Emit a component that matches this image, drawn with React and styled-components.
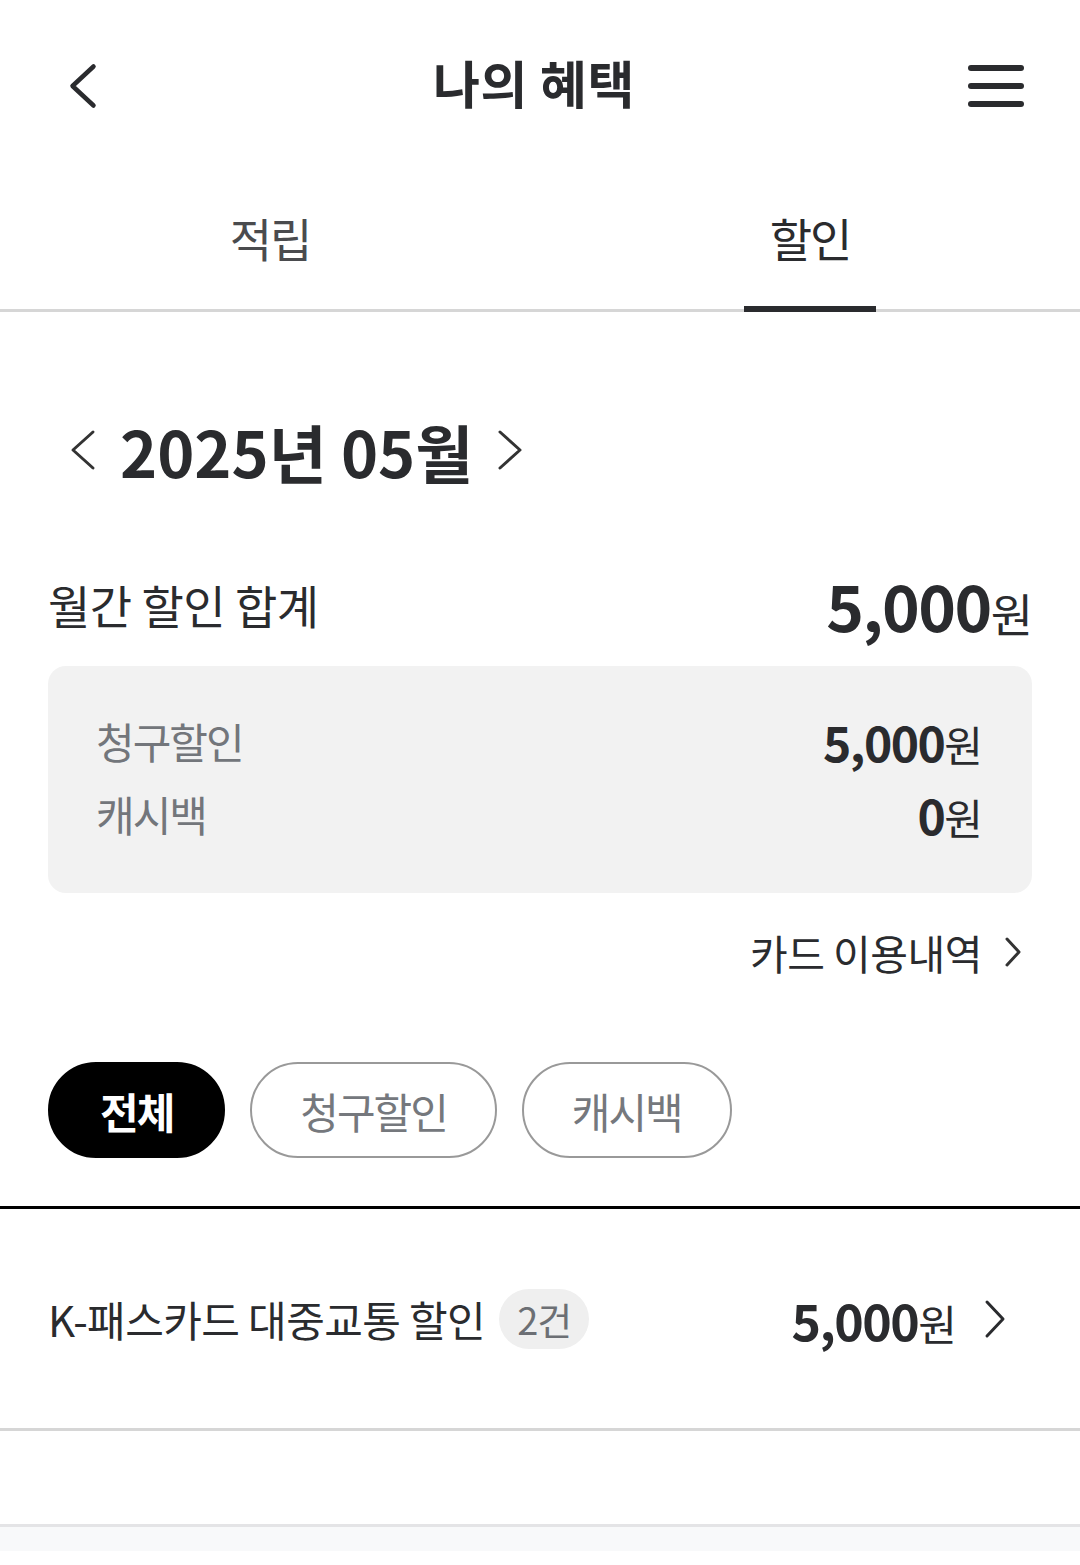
import React from 'react';
import styled, { createGlobalStyle } from 'styled-components';

const GlobalStyle = createGlobalStyle`
  html, body {
    margin: 0;
    padding: 0;
    background: #fff;
  }
  body {
    font-family: "Noto Sans CJK KR", "Noto Sans", sans-serif;
    color: #2a2b2e;
  }
  * { box-sizing: border-box; }
`;

const Page = styled.div`
  width: 1080px;
  min-height: 1565px;
  background: #fff;
`;

const Header = styled.header`
  height: 172px;
  display: flex;
  align-items: center;
  justify-content: space-between;
  padding: 0 56px 0 66px;
`;

const IconButton = styled.button`
  border: 0;
  background: none;
  padding: 0;
  display: flex;
  align-items: center;
  justify-content: center;
  width: ${p => p.$w}px;
  height: ${p => p.$h}px;
`;

const Title = styled.h1`
  margin: 0 0 8px;
  font-size: 51px;
  font-weight: 700;
  letter-spacing: 0.5px;
  line-height: 1;
  color: #2a2b2e;
`;

const TabBar = styled.nav`
  height: 140px;
  display: grid;
  grid-template-columns: 1fr 1fr;
  border-bottom: 3px solid #d6d6d6;
`;

const Tab = styled.div`
  position: relative;
  display: flex;
  align-items: center;
  justify-content: center;
  padding-bottom: 8px;
  font-size: 46px;
  letter-spacing: -2px;
  color: ${p => (p.$active ? '#2a2b2e' : '#4a4b4e')};
  &::after {
    content: '';
    display: ${p => (p.$active ? 'block' : 'none')};
    position: absolute;
    left: 50%;
    bottom: -3px;
    width: 132px;
    margin-left: -66px;
    height: 6px;
    background: #2a2b2e;
  }
`;

const MonthNav = styled.div`
  margin-top: 88px;
  height: 100px;
  display: flex;
  align-items: center;
  padding-left: 70px;
  gap: 24px;
`;

const MonthLabel = styled.div`
  font-size: 63px;
  font-weight: 700;
  letter-spacing: 0;
  line-height: 1;
  color: #2a2b2e;
`;

const SummaryHead = styled.div`
  margin-top: 64px;
  height: 80px;
  padding: 0 48px;
  display: flex;
  align-items: center;
  justify-content: space-between;
`;

const SummaryLabel = styled.div`
  font-size: 46px;
  letter-spacing: -0.5px;
  color: #2a2b2e;
`;

const Amount = styled.div`
  display: flex;
  align-items: baseline;
  color: #2a2b2e;
  line-height: 1;
`;

const Num = styled.span`
  font-size: ${p => p.$size}px;
  font-weight: 700;
  letter-spacing: -1.5px;
`;

const Won = styled.span`
  font-size: ${p => p.$size}px;
  font-weight: 400;
  letter-spacing: -1px;
`;

const DetailBox = styled.div`
  margin: 22px 48px 0;
  background: #f2f2f2;
  border-radius: 18px;
  padding: 38px 50px 43px 48px;
`;

const DetailRow = styled.div`
  height: 73px;
  display: flex;
  align-items: center;
  justify-content: space-between;
`;

const DetailLabel = styled.div`
  font-size: 42px;
  letter-spacing: -2px;
  color: #73767b;
`;

const LinkRow = styled.div`
  margin-top: 29px;
  height: 60px;
  padding: 0 58px 0 48px;
  display: flex;
  align-items: center;
  justify-content: flex-end;
  gap: 22px;
  font-size: 41px;
  letter-spacing: -0.5px;
  color: #2a2b2e;
`;

const ChipRow = styled.div`
  margin-top: 80px;
  padding: 0 48px;
  display: flex;
  gap: 25px;
`;

const Chip = styled.button`
  height: 96px;
  padding: 0 ${p => p.$pad}px;
  border-radius: 48px;
  font-family: inherit;
  font-size: 42px;
  letter-spacing: -2px;
  font-weight: ${p => (p.$active ? 700 : 400)};
  color: ${p => (p.$active ? '#fff' : '#75787d')};
  background: ${p => (p.$active ? '#000' : '#fff')};
  border: 2px solid ${p => (p.$active ? '#000' : '#999')};
  display: flex;
  align-items: center;
`;

const ListTop = styled.div`
  margin-top: 48px;
  border-top: 3px solid #000;
`;

const ListItem = styled.div`
  height: 222px;
  padding: 0 74px 0 48px;
  display: flex;
  align-items: center;
  justify-content: space-between;
  border-bottom: 3px solid #d6d6d6;
`;

const ItemLeft = styled.div`
  display: flex;
  align-items: center;
  gap: 14px;
`;

const ItemName = styled.div`
  font-size: 42px;
  letter-spacing: -0.6px;
  color: #2a2b2e;
`;

const CountBadge = styled.span`
  height: 60px;
  padding: 0 18px;
  border-radius: 30px;
  background: #efefef;
  display: flex;
  align-items: center;
  font-size: 38px;
  letter-spacing: -1px;
  color: #6c6f74;
`;

const ItemRight = styled.div`
  display: flex;
  align-items: center;
  gap: 28px;
`;

const Spacer = styled.div`
  height: 96px;
  border-bottom: 3px solid #e4e4e6;
`;

const Footer = styled.div`
  height: 24px;
  background: #f8f9fa;
`;

const Chevron = ({ dir = 'right', w, h, stroke = 3, color = '#2a2b2e' }) => {
  const pts = dir === 'left'
    ? `${w - stroke} ${stroke}, ${stroke} ${h / 2}, ${w - stroke} ${h - stroke}`
    : `${stroke} ${stroke}, ${w - stroke} ${h / 2}, ${stroke} ${h - stroke}`;
  return (
    <svg width={w} height={h} viewBox={`0 0 ${w} ${h}`}>
      <polyline points={pts} fill="none" stroke={color} strokeWidth={stroke} strokeLinecap="round" strokeLinejoin="round" />
    </svg>
  );
};

const Hamburger = () => (
  <svg width="56" height="44" viewBox="0 0 56 44">
    {[4, 22, 40].map(y => (
      <line key={y} x1="3" y1={y} x2="53" y2={y} stroke="#2a2b2e" strokeWidth="6" strokeLinecap="round" />
    ))}
  </svg>
);

const Price = ({ value, num, won }) => (
  <Amount>
    <Num $size={num}>{value}</Num>
    <Won $size={won}>원</Won>
  </Amount>
);

const details = [
  { label: '청구할인', value: '5,000' },
  { label: '캐시백', value: '0' },
];

const chips = [
  { label: '전체', active: true, pad: 50 },
  { label: '청구할인', pad: 48 },
  { label: '캐시백', pad: 48 },
];

export default function App() {
  return (
    <Page>
      <GlobalStyle />
      <Header>
        <IconButton $w={34} $h={50}>
          <Chevron dir="left" w={30} h={48} stroke={4.5} />
        </IconButton>
        <Title>나의 혜택</Title>
        <IconButton $w={56} $h={50}>
          <Hamburger />
        </IconButton>
      </Header>

      <TabBar>
        <Tab>적립</Tab>
        <Tab $active>할인</Tab>
      </TabBar>

      <MonthNav>
        <Chevron dir="left" w={26} h={42} stroke={3} color="#333" />
        <MonthLabel>2025년 05월</MonthLabel>
        <Chevron dir="right" w={26} h={42} stroke={3} color="#333" />
      </MonthNav>

      <SummaryHead>
        <SummaryLabel>월간 할인 합계</SummaryLabel>
        <Price value="5,000" num={64} won={46} />
      </SummaryHead>

      <DetailBox>
        {details.map(d => (
          <DetailRow key={d.label}>
            <DetailLabel>{d.label}</DetailLabel>
            <Price value={d.value} num={48} won={42} />
          </DetailRow>
        ))}
      </DetailBox>

      <LinkRow>
        카드 이용내역
        <Chevron dir="right" w={18} h={32} stroke={3} color="#333" />
      </LinkRow>

      <ChipRow>
        {chips.map(c => (
          <Chip key={c.label} $active={c.active} $pad={c.pad}>{c.label}</Chip>
        ))}
      </ChipRow>

      <ListTop>
        <ListItem>
          <ItemLeft>
            <ItemName>K-패스카드 대중교통 할인</ItemName>
            <CountBadge>2건</CountBadge>
          </ItemLeft>
          <ItemRight>
            <Price value="5,000" num={50} won={42} />
            <Chevron dir="right" w={22} h={40} stroke={3} />
          </ItemRight>
        </ListItem>
      </ListTop>

      <Spacer />
      <Footer />
    </Page>
  );
}
